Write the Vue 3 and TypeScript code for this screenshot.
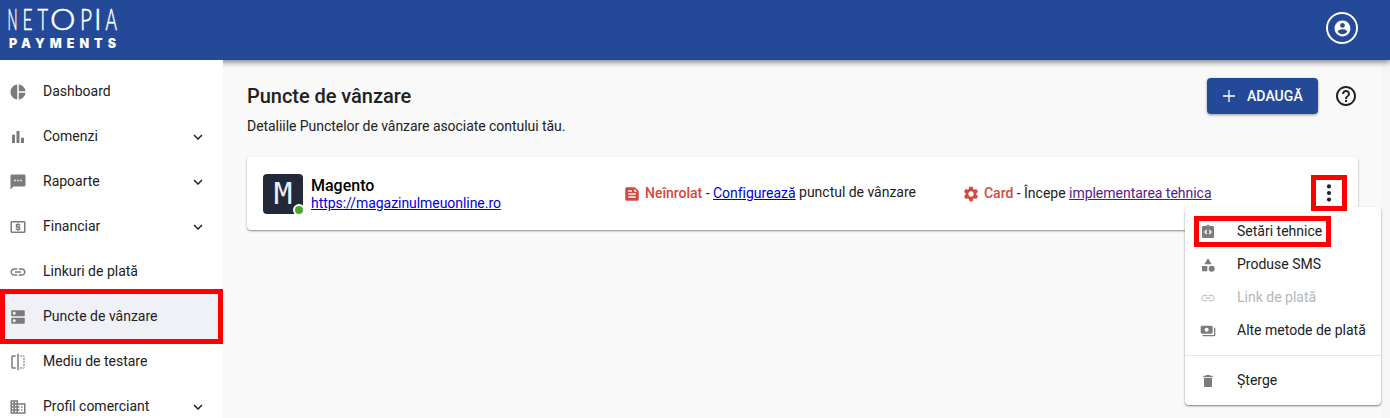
<script setup lang="ts">
interface NavItem { label: string; icon: string; expandable?: boolean; active?: boolean }
interface MenuItem { label: string; icon: string; disabled?: boolean; marked?: boolean }

const linkIcon = 'M3.9 12c0-1.71 1.39-3.1 3.1-3.1h4V7H7c-2.76 0-5 2.24-5 5s2.24 5 5 5h4v-1.9H7c-1.71 0-3.1-1.39-3.1-3.1zM8 13h8v-2H8v2zm9-6h-4v1.9h4c1.71 0 3.1 1.39 3.1 3.1s-1.39 3.1-3.1 3.1h-4V17h4c2.76 0 5-2.24 5-5s-2.24-5-5-5z'

const nav: NavItem[] = [
  { label: 'Dashboard', icon: 'M11 2v20c-5.07-.5-9-4.79-9-10s3.93-9.5 9-10zm2.03 0v8.99H22c-.47-4.74-4.24-8.52-8.97-8.99zm0 11.01V22c4.74-.47 8.5-4.25 8.97-8.99h-8.97z' },
  { label: 'Comenzi', icon: 'M4 9h4v11H4zm12 4h4v7h-4zm-6-9h4v16h-4z', expandable: true },
  { label: 'Rapoarte', icon: 'M20 2H4c-1.1 0-1.99.9-1.99 2L2 22l4-4h14c1.1 0 2-.9 2-2V4c0-1.1-.9-2-2-2zM9 11H7V9h2v2zm4 0h-2V9h2v2zm4 0h-2V9h2v2z', expandable: true },
  { label: 'Financiar', icon: 'M11 17h2v-1h1c.55 0 1-.45 1-1v-3c0-.55-.45-1-1-1h-3v-1h4V8h-2V7h-2v1h-1c-.55 0-1 .45-1 1v3c0 .55.45 1 1 1h3v1H9v2h2v1zm9-13H4c-1.11 0-1.99.89-1.99 2L2 18c0 1.11.89 2 2 2h16c1.11 0 2-.89 2-2V6c0-1.11-.89-2-2-2zm0 14H4V6h16v12z', expandable: true },
  { label: 'Linkuri de plată', icon: linkIcon },
  { label: 'Puncte de vânzare', icon: 'M20 13H4c-.55 0-1 .45-1 1v6c0 .55.45 1 1 1h16c.55 0 1-.45 1-1v-6c0-.55-.45-1-1-1zM7 19c-1.1 0-2-.9-2-2s.9-2 2-2 2 .9 2 2-.9 2-2 2zM20 3H4c-.55 0-1 .45-1 1v6c0 .55.45 1 1 1h16c.55 0 1-.45 1-1V4c0-.55-.45-1-1-1zM7 9c-1.1 0-2-.9-2-2s.9-2 2-2 2 .9 2 2-.9 2-2 2z', active: true },
  { label: 'Mediu de testare', icon: 'M15 21h2v-2h-2v2zm4-12h2V7h-2v2zM3 5v14c0 1.1.9 2 2 2h4v-2H5V5h4V3H5c-1.1 0-2 .9-2 2zm16-2v2h2c0-1.1-.9-2-2-2zm-8 20h2V1h-2v22zm8-6h2v-2h-2v2zM15 5h2V3h-2v2zm4 8h2v-2h-2v2zm0 8c1.1 0 2-.9 2-2h-2v2z' },
  { label: 'Profil comerciant', icon: 'M12 7V3H2v18h20V7H12zM6 19H4v-2h2v2zm0-4H4v-2h2v2zm0-4H4V9h2v2zm0-4H4V5h2v2zm4 12H8v-2h2v2zm0-4H8v-2h2v2zm0-4H8V9h2v2zm0-4H8V5h2v2zm10 12h-8v-2h2v-2h-2v-2h2v-2h-2V9h8v10zm-2-8h-2v2h2v-2zm0 4h-2v2h2v-2z', expandable: true },
]

const menu: MenuItem[] = [
  { label: 'Setări tehnice', marked: true, icon: 'M19 3h-4.18C14.4 1.84 13.3 1 12 1s-2.4.84-2.82 2H5c-1.1 0-2 .9-2 2v14c0 1.1.9 2 2 2h14c1.1 0 2-.9 2-2V5c0-1.1-.9-2-2-2zM11 14.17l-1.41 1.42L6 12l3.59-3.59L11 9.83 8.83 12 11 14.17zM12 4.25c-.41 0-.75-.34-.75-.75s.34-.75.75-.75.75.34.75.75-.34.75-.75.75zm2.41 11.34L13 14.17 15.17 12 13 9.83l1.41-1.42L18 12l-3.59 3.59z' },
  { label: 'Produse SMS', icon: 'M12 2l-5.5 9h11zM17.5 13a4.5 4.5 0 1 0 0 9 4.5 4.5 0 0 0 0-9zM3 13.5h8v8H3z' },
  { label: 'Link de plată', icon: linkIcon, disabled: true },
  { label: 'Alte metode de plată', icon: 'M19 14V6c0-1.1-.9-2-2-2H3c-1.1 0-2 .9-2 2v8c0 1.1.9 2 2 2h14c1.1 0 2-.9 2-2zm-9-1c-1.66 0-3-1.34-3-3s1.34-3 3-3 3 1.34 3 3-1.34 3-3 3zm13-6v11c0 1.1-.9 2-2 2H4v-2h17V7h2z' },
]
</script>

<template>
  <div class="app">
    <header class="topbar">
      <svg class="logo" width="130" height="60" viewBox="0 0 130 60">
        <g class="logo-name">
          <text x="7.5" y="29.5" textLength="10" lengthAdjust="spacingAndGlyphs">N</text>
          <text x="22.5" y="29.5" textLength="10" lengthAdjust="spacingAndGlyphs">E</text>
          <text x="37.5" y="29.5" textLength="10.5" lengthAdjust="spacingAndGlyphs">T</text>
          <text x="50" y="29.5" textLength="25.5" lengthAdjust="spacingAndGlyphs">O</text>
          <text x="80" y="29.5" textLength="12" lengthAdjust="spacingAndGlyphs">P</text>
          <text x="94" y="29.5">I</text>
          <text x="105.5" y="29.5" textLength="11.5" lengthAdjust="spacingAndGlyphs">A</text>
        </g>
        <text class="logo-sub" x="9" y="48" textLength="107" lengthAdjust="spacing">PAYMENTS</text>
      </svg>
      <div class="account">
        <svg width="19" height="19" viewBox="0 0 24 24"><path d="M12 2C6.48 2 2 6.48 2 12s4.48 10 10 10 10-4.48 10-10S17.52 2 12 2zm0 3c1.66 0 3 1.34 3 3s-1.34 3-3 3-3-1.34-3-3 1.34-3 3-3zm0 14.2c-2.5 0-4.71-1.28-6-3.22.03-1.99 4-3.08 6-3.08 1.99 0 5.97 1.09 6 3.08-1.29 1.94-3.5 3.22-6 3.22z" /></svg>
      </div>
    </header>

    <div class="body">
      <nav class="sidebar">
        <a v-for="item in nav" :key="item.label" class="nav-item" :class="{ active: item.active }">
          <svg class="nav-icon" width="18" height="18" viewBox="0 0 24 24"><path :d="item.icon" /></svg>
          <span class="nav-label">{{ item.label }}</span>
          <svg v-if="item.expandable" class="chevron" width="18" height="18" viewBox="0 0 24 24"><path d="M16.59 8.59L12 13.17 7.41 8.59 6 10l6 6 6-6z" /></svg>
        </a>
      </nav>

      <main class="content">
        <div class="heading">
          <div>
            <h1>Puncte de vânzare</h1>
            <p>Detaliile Punctelor de vânzare asociate contului tău.</p>
          </div>
          <div class="actions">
            <button class="add">
              <svg width="20" height="20" viewBox="0 0 20 20"><path d="M9.35 4h1.3v5.35H16v1.3h-5.35V16h-1.3v-5.35H4v-1.3h5.35z" /></svg>
              <span>ADAUGĂ</span>
            </button>
            <svg class="help" width="24" height="24" viewBox="0 0 24 24"><path d="M11 18h2v-2h-2v2zm1-16C6.48 2 2 6.48 2 12s4.48 10 10 10 10-4.48 10-10S17.52 2 12 2zm0 18c-4.41 0-8-3.59-8-8s3.59-8 8-8 8 3.59 8 8-3.59 8-8 8zm0-14c-2.21 0-4 1.79-4 4h2c0-1.1.9-2 2-2s2 .9 2 2c0 2-3 1.75-3 5h2c0-2.25 3-2.5 3-5 0-2.21-1.79-4-4-4z" /></svg>
          </div>
        </div>

        <section class="card">
          <div class="store">
            <div class="avatar">M<i class="online"></i></div>
            <div class="store-text">
              <strong>Magento</strong>
              <a class="url">https://magazinulmeuonline.ro</a>
            </div>
          </div>
          <div class="status">
            <svg width="18" height="18" viewBox="0 0 24 24"><path d="M16 3H5c-1.1 0-2 .9-2 2v14c0 1.1.9 2 2 2h14c1.1 0 2-.9 2-2V8l-5-5zM7 7h5v2H7V7zm10 10H7v-2h10v2zm0-4H7v-2h10v2zm-2-4V5l4 4h-4z" /></svg>
            <span><b>Neînrolat</b> - <a>Configurează</a> <span class="raised">punctul de vânzare</span></span>
          </div>
          <div class="status">
            <svg width="18" height="18" viewBox="0 0 24 24"><path d="M19.14 12.94c.04-.3.06-.61.06-.94 0-.32-.02-.64-.07-.94l2.03-1.58c.18-.14.23-.41.12-.61l-1.92-3.32c-.12-.22-.37-.29-.59-.22l-2.39.96c-.5-.38-1.03-.7-1.62-.94l-.36-2.54c-.04-.24-.24-.41-.48-.41h-3.84c-.24 0-.43.17-.47.41l-.36 2.54c-.59.24-1.13.57-1.62.94l-2.39-.96c-.22-.08-.47 0-.59.22L2.74 8.87c-.12.21-.08.47.12.61l2.03 1.58c-.05.3-.09.63-.09.94s.02.64.07.94l-2.03 1.58c-.18.14-.23.41-.12.61l1.92 3.32c.12.22.37.29.59.22l2.39-.96c.5.38 1.03.7 1.62.94l.36 2.54c.05.24.24.41.48.41h3.84c.24 0 .44-.17.47-.41l.36-2.54c.59-.24 1.13-.56 1.62-.94l2.39.96c.22.08.47 0 .59-.22l1.92-3.32c.12-.22.07-.47-.12-.61l-2.01-1.58zM12 15.6c-1.98 0-3.6-1.62-3.6-3.6s1.62-3.6 3.6-3.6 3.6 1.62 3.6 3.6-1.62 3.6-3.6 3.6z" /></svg>
            <span><b>Card</b> - Începe <a class="visited">implementarea tehnica</a></span>
          </div>
          <button class="more">
            <svg width="24" height="24" viewBox="0 0 24 24"><circle cx="12" cy="5.4" r="2.1" /><circle cx="12" cy="12" r="2.1" /><circle cx="12" cy="18.6" r="2.1" /></svg>
          </button>

          <div class="menu">
            <div v-for="item in menu" :key="item.label" class="menu-item" :class="{ disabled: item.disabled, marked: item.marked }">
              <svg width="16" height="16" viewBox="0 0 24 24"><path :d="item.icon" /></svg>
              <span>{{ item.label }}</span>
            </div>
            <div class="divider"></div>
            <div class="menu-item">
              <svg width="16" height="16" viewBox="0 0 24 24"><path d="M6 19c0 1.1.9 2 2 2h8c1.1 0 2-.9 2-2V7H6v12zM19 4h-3.5l-1-1h-5l-1 1H5v2h14V4z" /></svg>
              <span>Șterge</span>
            </div>
          </div>
        </section>
      </main>
      <div class="gutter"></div>
    </div>
  </div>
</template>

<style>
body { margin: 0; overflow: hidden; }
</style>

<style scoped>
.app {
  display: flex;
  flex-direction: column;
  width: 1390px;
  height: 418px;
  overflow: hidden;
  background: #f9f9f9;
  color: #212121;
  font: 14px/20px Roboto, sans-serif;
}
.app *, .app *::after { box-sizing: border-box; }
svg { display: block; flex: none; fill: currentColor; }
.topbar {
  position: relative;
  z-index: 1;
  display: flex;
  justify-content: space-between;
  flex: none;
  height: 60px;
  padding-right: 32px;
  background: #244999;
  color: #fff;
  box-shadow: 0 2px 6px rgba(0, 0, 0, .5);
}
.logo-name { font: 300 29px Lato, sans-serif; stroke: #fff; stroke-width: .6px; }
.logo-sub { font: 900 12.5px Inter, sans-serif; }
.account {
  display: grid;
  place-items: center;
  width: 32px;
  height: 32px;
  margin-top: 12px;
  border: 2px solid #fff;
  border-radius: 50%;
}
.body { display: flex; flex: 1; min-height: 0; }
.sidebar {
  position: relative;
  z-index: 2;
  flex: none;
  width: 223px;
  padding-top: 9px;
  background: #fff;
}
.nav-item { position: relative; display: flex; align-items: center; height: 45px; padding: 0 16px 0 9px; }
.nav-icon { margin: 1px 16px 0 0; color: #7b7b7b; }
.nav-label { flex: 1; padding-bottom: 2px; }
.chevron { margin: 1px 0 0; }
.active { background: #f0f1f7; }
.active::after {
  content: '';
  position: absolute;
  inset: -5px 0;
  border: 5px solid #f00;
}
.content { flex: 1; padding: 18px 24px 0; }
.heading { display: flex; justify-content: space-between; height: 79px; }
h1 { margin: 6px 0 0; font-size: 20px; line-height: 24px; font-weight: 500; letter-spacing: -.04px; }
p { margin: 8px 0 0; letter-spacing: -.05px; }
.actions { display: flex; gap: 16px; align-items: flex-start; }
.add {
  display: flex;
  align-items: center;
  gap: 8px;
  width: 111px;
  height: 36px;
  padding: 0 0 0 12px;
  border: 0;
  border-radius: 4px;
  background: #244999;
  color: #fff;
  font: 500 14px/20px Roboto, sans-serif;
  letter-spacing: .05px;
  box-shadow: 0 1px 3px rgba(0, 0, 0, .4);
}
.help { margin-top: 6px; }
.card {
  position: relative;
  display: grid;
  grid-template-columns: 376px 339px 1fr 36px;
  align-items: center;
  width: 1111px;
  height: 73px;
  padding: 0 11px 0 0;
  border-radius: 4px;
  background: #fff;
  box-shadow: 0 1px 2px rgba(0, 0, 0, .45);
}
.store { display: flex; gap: 8px; padding-left: 16px; }
.avatar {
  position: relative;
  width: 40px;
  height: 40px;
  border-radius: 4px;
  background: #222938;
  color: #e9eefb;
  font: 31px/38px "DejaVu Sans Mono", monospace;
  text-align: center;
}
.online {
  position: absolute;
  right: -2px;
  bottom: -2px;
  width: 12px;
  height: 12px;
  border: 2px solid #fff;
  border-radius: 50%;
  background: #4ca52f;
}
.store-text { display: flex; flex-direction: column; padding-top: 2px; }
.store-text strong { color: #000; font-size: 16px; line-height: 19px; font-weight: 500; }
.store-text a { line-height: 17px; letter-spacing: -.05px; }
a { color: inherit; }
.url, .status a { color: #0000d8; text-decoration: underline; }
.status { display: flex; align-items: center; gap: 4px; white-space: nowrap; letter-spacing: -.02px; }
.status > span { padding-bottom: 1px; }
.status svg { color: #d44840; margin-top: 1px; }
.status b { color: #d44840; font-weight: 500; }
.status .visited { color: #551a8b; }
.raised { position: relative; top: -1px; }
.more {
  position: relative;
  z-index: 1;
  top: -1px;
  display: grid;
  place-items: center;
  width: 36px;
  height: 36px;
  padding: 0;
  border: 5px solid #f00;
  background: #fff;
  color: #212121;
}
.menu {
  position: absolute;
  left: 938px;
  top: 50px;
  width: 196px;
  height: 198px;
  padding-top: 8px;
  border-radius: 4px;
  background: #fff;
  box-shadow: 0 1px 2px rgba(0, 0, 0, .5);
}
.menu-item {
  position: relative;
  display: flex;
  align-items: center;
  gap: 21px;
  height: 33px;
  padding-left: 15px;
  white-space: nowrap;
}
.menu-item span { padding-bottom: 2px; }
.menu-item svg { color: #7b7b7b; }
.disabled { color: #b5b5b5; }
.disabled svg { color: #c9c9c9; }
.marked::after {
  content: '';
  position: absolute;
  left: 9px;
  top: 1px;
  width: 137px;
  height: 31px;
  border: 5px solid #f00;
}
.divider { height: 1px; margin: 8px 0; background: #e8e8e8; }
.gutter { flex: none; width: 8px; background: #f5f6f8; }
.card { z-index: 0; }
</style>
